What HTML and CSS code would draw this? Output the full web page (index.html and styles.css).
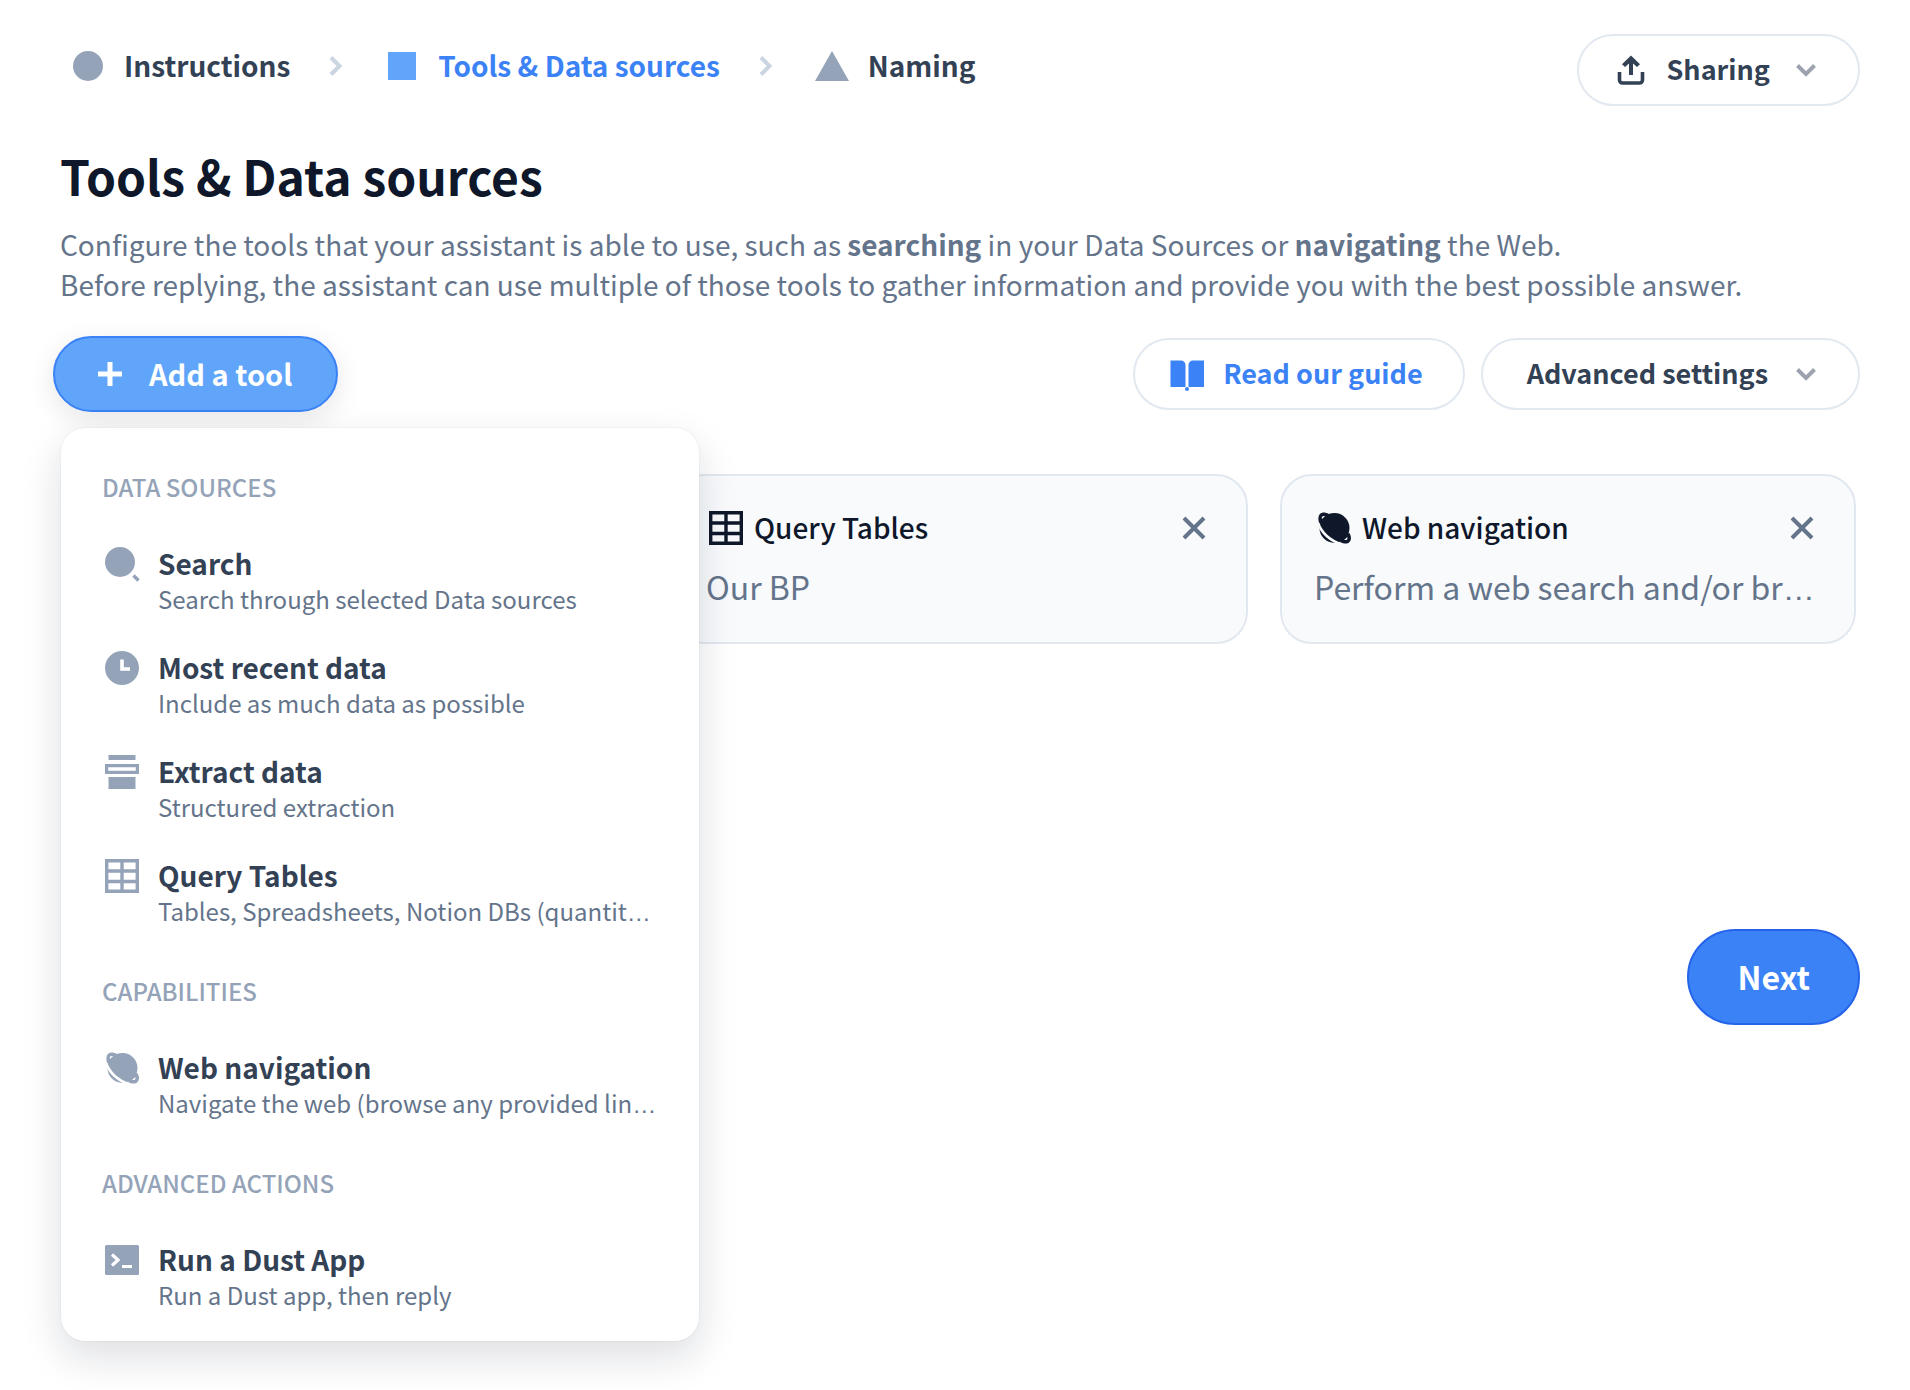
FILE: index.html
```html
<!DOCTYPE html>
<html lang="en">
<head>
<meta charset="utf-8">
<meta name="viewport" content="width=device-width, initial-scale=1">
<title>Tools &amp; Data sources</title>
<link rel="stylesheet" href="styles.css">
</head>
<body>
<svg class="sprite" aria-hidden="true">
  <symbol id="i-circle" viewBox="0 0 40 40"><circle cx="20" cy="20" r="15" fill="currentColor"/></symbol>
  <symbol id="i-square" viewBox="0 0 40 40"><path d="M6 6h28v28H6z" fill="currentColor"/></symbol>
  <symbol id="i-triangle" viewBox="0 0 40 40"><path d="M20 5 37 35H3z" fill="currentColor"/></symbol>
  <symbol id="i-right" viewBox="0 0 32 32"><path d="m11 7.500 8.500 8.500-8.500 8.500" fill="none" stroke="currentColor" stroke-width="4"/></symbol>
  <symbol id="i-down" viewBox="0 0 40 40"><path d="m11.500 15.500 8.500 8.500 8.500-8.500" fill="none" stroke="currentColor" stroke-width="4"/></symbol>
  <symbol id="i-share" viewBox="0 0 40 40"><path d="M8.500 22v8a3 3 0 0 0 3 3h17a3 3 0 0 0 3-3v-8" fill="none" stroke="currentColor" stroke-width="3.600"/><path d="m20 5.500 9 8.700-3 2.800-4-3.500V25h-4V13.500L14 17l-3-2.800z" fill="currentColor"/></symbol>
  <symbol id="i-plus" viewBox="0 0 40 40"><path d="M20 8v24M8 20h24" stroke="currentColor" stroke-width="5"/></symbol>
  <symbol id="i-book" viewBox="0 0 40 40"><path d="M3.500 6.500h10.500a4.500 4.500 0 0 1 4.500 4.500v22h-15zM37 6.500H26a4.500 4.500 0 0 0-4.500 4.500v22H37z" fill="currentColor"/><circle cx="20" cy="35" r="2" fill="currentColor"/></symbol>
  <symbol id="i-table" viewBox="0 0 40 40"><path d="M4.700 4.700h30.600v30.600H4.700zM20 4.700v30.600M4.700 15h30.600M4.700 25.500h30.600" fill="none" stroke="currentColor" stroke-width="3.400"/></symbol>
  <symbol id="i-close" viewBox="0 0 40 40"><path d="m10 10 20 20M30 10 10 30" stroke="currentColor" stroke-width="4"/></symbol>
  <symbol id="i-planet" viewBox="0 0 40 40"><g fill="currentColor"><circle cx="20.500" cy="20" r="15"/><path d="M5.500 16C4 12 4 8 6 6s5-2 9 0l-2 8zM35.500 25c2 4 2 7 0 9s-5 2-9.500 0l3-7z"/></g><path d="M4 15C7.500 24.500 15 32 27.500 36.500" fill="none" stroke="var(--hole)" stroke-width="2.600"/><path d="M8 11c-.7-2.200.3-3.500 3.200-3zM33.300 29c.7 2.200-.3 3.500-3.200 3z" fill="var(--hole)"/></symbol>
  <symbol id="i-search" viewBox="0 0 40 40"><circle cx="18" cy="18" r="15" fill="currentColor"/><path d="m31.500 31.500 5 5" stroke="currentColor" stroke-width="3.400"/></symbol>
  <symbol id="i-clock" viewBox="0 0 40 40"><circle cx="20" cy="20" r="17" fill="currentColor"/><path d="M20 11.500V21h8" fill="none" stroke="var(--hole)" stroke-width="3.600"/></symbol>
  <symbol id="i-extract" viewBox="0 0 40 40"><path d="M6.500 3h27v5h-27zM6.500 25h27v12h-27z" fill="currentColor"/><path d="M4.600 13.600h30.800v6.800H4.600z" fill="none" stroke="currentColor" stroke-width="3.200"/></symbol>
  <symbol id="i-terminal" viewBox="0 0 40 40"><rect x="3" y="5" width="34" height="30" rx="1.500" fill="currentColor"/><path d="m10 14.500 6 5.500-6 5.500M20 26.500h10" fill="none" stroke="var(--hole)" stroke-width="3.200"/></symbol>
</svg>

<div class="page">
  <header class="topbar">
    <nav class="steps" aria-label="Steps">
      <a class="step" href="#instructions"><svg class="icon"><use href="#i-circle"/></svg><span class="label">Instructions</span></a>
      <svg class="separator"><use href="#i-right"/></svg>
      <a class="step current" href="#tools" aria-current="step"><svg class="icon"><use href="#i-square"/></svg><span class="label">Tools &amp; Data sources</span></a>
      <svg class="separator"><use href="#i-right"/></svg>
      <a class="step" href="#naming"><svg class="icon"><use href="#i-triangle"/></svg><span class="label">Naming</span></a>
    </nav>
    <button class="button" type="button"><svg class="icon"><use href="#i-share"/></svg><span class="label">Sharing</span><svg class="icon caret"><use href="#i-down"/></svg></button>
  </header>

  <main id="tools">
    <section class="intro">
      <h1>Tools &amp; Data sources</h1>
      <p>Configure the tools that your assistant is able to use, such as <strong>searching</strong> in your Data Sources or <strong>navigating</strong> the Web.<br>
      Before replying, the assistant can use multiple of those tools to gather information and provide you with the best possible answer.</p>
    </section>

    <div class="toolbar">
      <div class="dropdown">
        <button class="button add" type="button" aria-haspopup="menu" aria-expanded="true"><svg class="icon"><use href="#i-plus"/></svg><span class="label">Add a tool</span></button>
        <div class="menu">
          <h2>DATA SOURCES</h2>
          <button class="item" type="button"><svg class="icon"><use href="#i-search"/></svg><span class="text"><b>Search</b><small>Search through selected Data sources</small></span></button>
          <button class="item" type="button"><svg class="icon"><use href="#i-clock"/></svg><span class="text"><b>Most recent data</b><small>Include as much data as possible</small></span></button>
          <button class="item" type="button"><svg class="icon"><use href="#i-extract"/></svg><span class="text"><b>Extract data</b><small>Structured extraction</small></span></button>
          <button class="item" type="button"><svg class="icon"><use href="#i-table"/></svg><span class="text"><b>Query Tables</b><small>Tables, Spreadsheets, Notion DBs (quantit<span class="dots">…</span></small></span></button>
          <h2>CAPABILITIES</h2>
          <button class="item" type="button"><svg class="icon"><use href="#i-planet"/></svg><span class="text"><b>Web navigation</b><small>Navigate the web (browse any provided lin<span class="dots">…</span></small></span></button>
          <h2>ADVANCED ACTIONS</h2>
          <button class="item" type="button"><svg class="icon"><use href="#i-terminal"/></svg><span class="text"><b>Run a Dust App</b><small>Run a Dust app, then reply</small></span></button>
        </div>
      </div>
      <div class="actions">
        <a class="button guide" href="#guide"><svg class="icon"><use href="#i-book"/></svg><span class="label">Read our guide</span></a>
        <button class="button advanced" type="button"><span class="label">Advanced settings</span><svg class="icon caret"><use href="#i-down"/></svg></button>
      </div>
    </div>

    <section class="cards">
      <article class="card">
        <header><svg class="icon"><use href="#i-table"/></svg><h3 class="label">Query Tables</h3><button class="close" type="button" aria-label="Remove"><svg class="icon"><use href="#i-close"/></svg></button></header>
        <p>Our BP</p>
      </article>
      <article class="card">
        <header><svg class="icon"><use href="#i-planet"/></svg><h3 class="label">Web navigation</h3><button class="close" type="button" aria-label="Remove"><svg class="icon"><use href="#i-close"/></svg></button></header>
        <p>Perform a web search and/or br<span class="dots">…</span></p>
      </article>
    </section>
  </main>

  <footer class="footer">
    <button class="button next" type="button"><span class="label">Next</span></button>
  </footer>
</div>
</body>
</html>
```
FILE: styles.css
```css
* {
  box-sizing: border-box;
}

body {
  margin: 0;
  background: #fff;
  color: #334155;
  font-family: "Noto Sans CJK JP", "Noto Sans", sans-serif;
  font-size: 27px;
  line-height: 40px;
  --hole: #fff;
}

h1, h2, h3, p {
  margin: 0;
}

button {
  font: inherit;
  color: inherit;
  cursor: pointer;
}

a {
  color: inherit;
  text-decoration: none;
}

.sprite {
  position: absolute;
  width: 0;
  height: 0;
}

.icon {
  display: block;
  flex: none;
  width: 40px;
  height: 40px;
}

.label {
  padding-bottom: 2px;
  line-height: 38px;
}

.dots {
  font-family: "Liberation Sans", sans-serif;
  line-height: 1;
}

.page {
  min-height: 100vh;
  padding: 34px 50px 40px 53px;
}

/* Top bar */
.topbar {
  display: flex;
  align-items: flex-start;
  justify-content: space-between;
}

.steps {
  display: flex;
  align-items: center;
  gap: 30px;
  height: 64px;
  padding-left: 15px;
  font-size: 28px;
}

.step {
  display: flex;
  align-items: center;
  gap: 16px;
  font-weight: 700;
}

.step .icon {
  color: #94a3b8;
}

.step.current {
  color: #3b82f6;
}

.step.current .icon {
  color: #60a5fa;
}

.separator {
  width: 32px;
  height: 32px;
  color: #cbd5e1;
}

/* Buttons */
.button {
  display: flex;
  align-items: center;
  gap: 16px;
  height: 72px;
  padding: 0 32px;
  border: 2px solid #e2e8f0;
  border-radius: 48px;
  background: #fff;
  font-weight: 700;
  white-space: nowrap;
}

.caret {
  color: #9ca3af;
}

.guide {
  padding-right: 40px;
  color: #3b82f6;
}

.advanced {
  gap: 18px;
  padding-left: 44px;
}

.add {
  gap: 19px;
  height: 76px;
  padding: 0 44px 0 35px;
  border-color: #3b82f6;
  background: #60a5fa;
  color: #fff;
  font-size: 29px;
  box-shadow: 0 8px 28px rgba(15, 23, 42, 0.1);
}

.next {
  height: 96px;
  padding: 0 48px;
  border-color: #2563eb;
  background: #3b82f6;
  color: #fff;
  font-size: 32px;
}

/* Intro */
.intro {
  padding: 38px 7px 32px;
}

h1 {
  color: #0f172a;
  font-size: 48px;
  line-height: 62px;
}

.intro p {
  padding-top: 18px;
  color: #64748b;
  font-size: 28px;
}

/* Toolbar and its menu */
.toolbar, .actions {
  display: flex;
  align-items: center;
  gap: 16px;
}

.toolbar {
  justify-content: space-between;
}

.dropdown {
  position: relative;
}

.menu {
  position: absolute;
  z-index: 1;
  top: calc(100% + 16px);
  left: 8px;
  width: 638px;
  padding: 12px 41px 13px;
  border-radius: 24px;
  background: #fff;
  box-shadow: 0 0 2px rgba(15, 23, 42, 0.1), 0 16px 40px rgba(15, 23, 42, 0.14);
}

.menu h2 {
  padding: 31px 0 25px;
  color: #94a3b8;
  font-size: 24px;
  font-weight: 500;
  line-height: 32px;
}

.item {
  display: flex;
  align-items: flex-start;
  gap: 16px;
  width: 100%;
  padding: 16px 0;
  border: 0;
  background: none;
  text-align: left;
}

.item .icon {
  color: #94a3b8;
}

.item .text {
  display: grid;
  white-space: nowrap;
}

.item b {
  font-size: 28px;
  line-height: 38px;
}

.item small {
  color: #64748b;
  font-size: 24px;
  line-height: 34px;
}

/* Selected tools */
.cards {
  display: grid;
  grid-template-columns: repeat(3, 1fr);
  gap: 32px;
  padding: 62px 4px 0 11px;
}

.card {
  padding: 32px;
  border: 2px solid #e2e8f0;
  border-radius: 32px;
  background: #f8fafc;
  --hole: #f8fafc;
}

.card:first-child {
  grid-column-start: 2;
}

.card header {
  display: flex;
  align-items: center;
  gap: 8px;
  color: #0f172a;
}

.card h3 {
  flex: 1;
  font-size: 28px;
  font-weight: 500;
}

.close {
  padding: 0;
  border: 0;
  background: none;
  color: #64748b;
}

.card p {
  padding-top: 14px;
  color: #64748b;
  font-size: 32px;
  line-height: 48px;
  white-space: nowrap;
}

.footer {
  display: flex;
  justify-content: flex-end;
  padding-top: 285px;
}
```
